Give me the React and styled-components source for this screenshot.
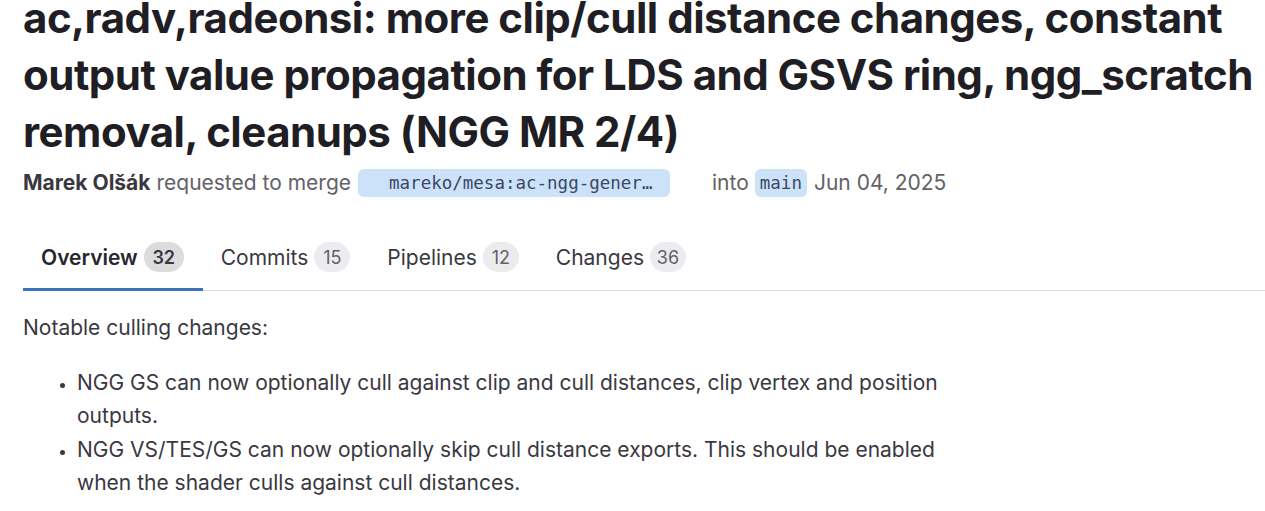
import React from "react";
import styled, { createGlobalStyle } from "styled-components";

const Global = createGlobalStyle`
  html, body { margin: 0; padding: 0; background: #fff; }
  body { font-family: Inter, "Noto Sans", sans-serif; color: #3a383f; overflow: hidden; }
`;

const Page = styled.div`
  padding: 0 0 0 23px;
  width: 1265px;
  box-sizing: border-box;
`;

const Title = styled.h1`
  margin: -11px 0 0 0;
  font-size: 42px;
  line-height: 57px;
  font-weight: 700;
  color: #1f1e24;
  letter-spacing: -0.5px;
`;

const Meta = styled.div`
  display: flex;
  align-items: center;
  margin-top: 9px;
  font-size: 21px;
  line-height: 28px;
  color: #626168;
  white-space: nowrap;
`;

const Author = styled.strong`
  font-weight: 700;
  color: #3a383f;
  margin-right: 6px;
`;

const RefPill = styled.span`
  display: inline-flex;
  align-items: center;
  box-sizing: border-box;
  height: 28px;
  background: #cbe2f9;
  border-radius: 6px;
  font-family: "DejaVu Sans Mono", "Liberation Mono", monospace;
  font-size: 17.5px;
  color: #3c4766;
  padding: ${(p) => (p.$wide ? "0 0 0 31px" : "0 5px")};
  width: ${(p) => (p.$wide ? "312px" : "auto")};
  margin-left: ${(p) => p.$ml || 0}px;
  margin-right: ${(p) => p.$mr || 0}px;
  overflow: hidden;
`;

const Tabs = styled.div`
  display: flex;
  margin-top: 26px;
  border-bottom: 1px solid #dcdcde;
`;

const Tab = styled.div`
  display: flex;
  align-items: center;
  gap: 6px;
  padding: 0 19px 0 18px;
  height: 68px;
  box-sizing: border-box;
  font-size: 21px;
  font-weight: ${(p) => (p.$active ? 600 : 400)};
  color: ${(p) => (p.$active ? "#28272d" : "#3a383f")};
  box-shadow: ${(p) => (p.$active ? "inset 0 -3px 0 #3e70c0" : "none")};
  margin-bottom: -1px;
`;

const Badge = styled.span`
  display: inline-flex;
  align-items: center;
  justify-content: center;
  height: 30px;
  min-width: ${(p) => (p.$active ? 40 : 36)}px;
  padding: 0 2px;
  box-sizing: border-box;
  border-radius: 15px;
  font-size: 18px;
  font-weight: ${(p) => (p.$active ? 600 : 400)};
  background: ${(p) => (p.$active ? "#dcdcde" : "#ececef")};
  color: ${(p) => (p.$active ? "#3a383f" : "#626168")};
`;

const Body = styled.div`
  font-size: 21px;
  line-height: 33.5px;
  color: #3a383f;
  width: 925px;
`;

const Para = styled.p`
  margin: 20px 0 0 0;
`;

const List = styled.ul`
  margin: 21px 0 0 0;
  padding-left: 54px;
  li::marker { font-size: 17px; }
`;

const tabs = [
  { name: "Overview", count: 32, active: true },
  { name: "Commits", count: 15 },
  { name: "Pipelines", count: 12 },
  { name: "Changes", count: 36 },
];

export default function App() {
  return (
    <Page>
      <Global />
      <Title>
        ac,radv,radeonsi: more clip/cull distance changes, constant output value
        propagation for LDS and GSVS ring, ngg_scratch removal, cleanups (NGG MR 2/4)
      </Title>
      <Meta>
        <Author>Marek Olšák</Author>
        requested to merge
        <RefPill $wide $ml={7} $mr={42}>mareko/mesa:ac-ngg-gener…</RefPill>
        into
        <RefPill $ml={6} $mr={7}>main</RefPill>
        Jun 04, 2025
      </Meta>
      <Tabs>
        {tabs.map((t) => (
          <Tab key={t.name} $active={t.active}>
            {t.name}
            <Badge $active={t.active}>{t.count}</Badge>
          </Tab>
        ))}
      </Tabs>
      <Body>
        <Para>Notable culling changes:</Para>
        <List>
          <li>
            NGG GS can now optionally cull against clip and cull distances, clip vertex and
            position outputs.
          </li>
          <li>
            NGG VS/TES/GS can now optionally skip cull distance exports. This should be
            enabled when the shader culls against cull distances.
          </li>
        </List>
      </Body>
    </Page>
  );
}
